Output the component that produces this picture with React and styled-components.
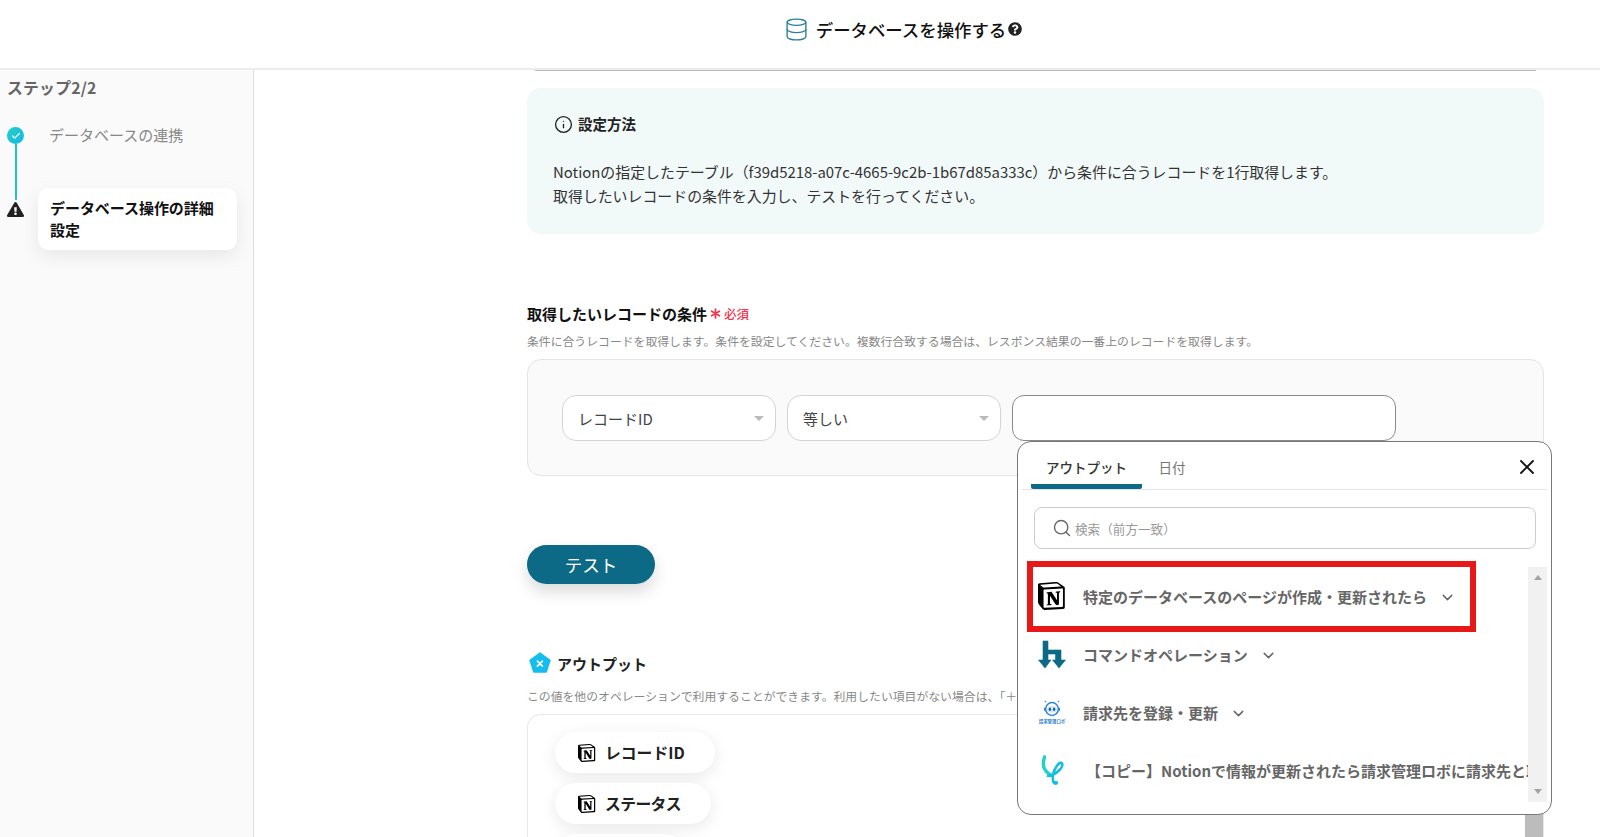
import React from 'react';
import styled, { createGlobalStyle } from 'styled-components';
import { Database, Info, Search, X, ChevronDown, Check } from 'lucide-react';
import { FaQuestionCircle, FaExclamationTriangle } from 'react-icons/fa';

const Global = createGlobalStyle`
  html, body { margin: 0; padding: 0; background: #fff; }
  * { box-sizing: border-box; }
  body { font-family: "Noto Sans CJK JP", "Noto Sans", sans-serif; color: #222; }
`;

const Page = styled.div`
  width: 1600px; height: 837px; overflow: hidden;
  display: flex; flex-direction: column;
`;
const Header = styled.header`
  height: 70px; flex: none; display: flex; align-items: center; justify-content: center;
  gap: 7px; padding-bottom: 10px; padding-left: 206px;
  border-bottom: 2px solid #ececec;
`;
const HeaderTitle = styled.h1`
  margin: 0; font-size: 17.4px; font-weight: 500; color: #111; display: flex; align-items: center; gap: 2px;
`;
const Body = styled.div`flex: 1; display: flex; min-height: 0;`;
const Sidebar = styled.aside`
  width: 254px; flex: none; background: #fafafa; border-right: 1px solid #dedede;
  padding: 8px 16px 0 7px;
`;
const StepTitle = styled.div`font-size: 15.8px; font-weight: 700; color: #666; line-height: 20px; letter-spacing: .25px;`;
const Steps = styled.div`
  margin-top: 27px; display: flex; flex-direction: column;
`;
const StepRow = styled.div`
  display: grid; grid-template-columns: 31px 1fr; align-items: flex-start; height: ${p => p.$h}px;
`;
const Rail = styled.div`
  display: flex; flex-direction: column; align-items: center; width: 17px; padding-top: ${p => p.$top}px;
`;
const CheckDot = styled.span`
  width: 17px; height: 17px; flex: none; border-radius: 50%; display: flex; align-items: center; justify-content: center;
  background: linear-gradient(135deg, #1fd0c0, #16b8ea); color: #fff;
`;
const RailLine = styled.span`width: 2px; height: 56px; flex: none; background: #1fc4cc;`;
const StepLabel = styled.div`
  font-size: 15px; color: #888; line-height: 22px; padding-left: 11px; margin-top: -1px;
`;
const ActiveStep = styled.div`
  background: #fff; border-radius: 10px; box-shadow: 0 6px 18px rgba(0,0,0,.08);
  width: 199px; height: 62px; padding: 9px 12px;
  font-size: 15px; font-weight: 700; line-height: 22px; color: #111; letter-spacing: -.05px;
`;
const Main = styled.main`
  flex: 1; padding: 0 56px 0 273px; display: flex; flex-direction: column; min-width: 0;
`;
const TopEdge = styled.div`height: 1px; flex: none; margin: 0 8px; background: #bdbdbd;`;
const InfoBox = styled.section`
  margin-top: 17px; height: 146px; flex: none; background: #f1f9f9; border-radius: 14px; padding: 26px 26px;
`;
const InfoHead = styled.div`
  display: flex; align-items: center; gap: 5px; font-size: 14.5px; font-weight: 700; color: #222; line-height: 20px;
  & > svg { margin-left: 1px; }
`;
const InfoText = styled.p`
  margin: 26px 0 0; font-size: 14.92px; line-height: 24px; color: #333;
`;
const FieldLabel = styled.div`
  margin-top: 69px; display: flex; align-items: center; gap: 3px; height: 22px;
  font-size: 15px; font-weight: 700; color: #111;
`;
const Required = styled.span`color: #f5334f; font-size: 12.5px; font-weight: 500; display: flex; align-items: center; gap: 3px;`;
const Hint = styled.div`
  margin-top: 8px; font-size: 11.85px; line-height: 18px; color: #888; white-space: nowrap;
`;
const ConditionBox = styled.div`
  margin-top: 9px; height: 117px; flex: none; background: #fafafa; border: 1px solid #e4e4e4; border-radius: 14px;
  padding: 35px 34px; display: flex; gap: 11px; align-items: flex-start;
`;
const Select = styled.div`
  width: 214px; height: 46px; background: #fff; border: 1px solid #d4d4d4; border-radius: 14px;
  display: flex; align-items: center; justify-content: space-between; padding: 0 11px 0 15px;
  font-size: 15px; color: #444;
`;
const Caret = styled.span`
  width: 0; height: 0; border-left: 5px solid transparent; border-right: 5px solid transparent; border-top: 5px solid #bbb;
`;
const InputWrap = styled.div`position: relative;`;
const TextInput = styled.div`
  width: 384px; height: 46px; background: #fff; border: 1px solid #8a8a8a; border-radius: 12px;
`;
const Popup = styled.div`
  position: absolute; z-index: 5; top: 46px; left: 5px; width: 535px; height: 374px;
  background: #fff; border: 1px solid #777; border-radius: 14px; padding: 0 4px;
`;
const TabBar = styled.div`
  height: 48px; display: flex; align-items: flex-end; border-bottom: 1px solid #e4e4e4; padding-left: 9px; position: relative;
`;
const Tab = styled.div`
  width: ${p => p.$w}px; height: 48px; display: flex; align-items: center; justify-content: center;
  font-size: 13.5px; padding-top: 8px; font-weight: ${p => p.$active ? 500 : 400}; color: ${p => p.$active ? '#333' : '#777'};
  border-bottom: 5px solid ${p => p.$active ? '#0d6a87' : 'transparent'};
  border-radius: 0 0 2px 2px;
`;
const Close = styled.span`position: absolute; right: 8px; top: 13px; color: #111; display: flex;`;
const SearchBox = styled.div`
  margin: 17px 11px 0 12px; height: 42px; border: 1px solid #ccc; border-radius: 8px;
  display: flex; align-items: center; gap: 3px; padding-left: 17px; font-size: 12.6px; color: #999;
`;
const ListArea = styled.div`
  margin-top: 18px; display: flex; height: 235px; position: relative;
`;
const Rows = styled.div`flex: 1; min-width: 0; overflow: hidden;`;
const Row = styled.div`
  height: 58px; display: flex; align-items: center; padding-left: 15px; white-space: nowrap;
  font-size: 15px; font-weight: 700; color: #666;
`;
const RowIcon = styled.span`width: 30px; height: 30px; flex: none; display: flex; align-items: center; justify-content: center; margin-right: 16px;`;
const RowChevron = styled.span`display: flex; margin-left: 12px; margin-top: 3px; color: #666;`;
const CopyText = styled.span`padding-left: 3px; overflow: hidden;`;
const ScrollTrack = styled.div`
  width: 19px; flex: none; background: #f1f1f1;
  display: flex; flex-direction: column; justify-content: space-between; align-items: center; padding: 8px 0;
`;
const ArrowUp = styled.span`width: 0; height: 0; border-left: 4px solid transparent; border-right: 4px solid transparent; border-bottom: 5px solid #a3a3a3;`;
const ArrowDown = styled.span`width: 0; height: 0; border-left: 4px solid transparent; border-right: 4px solid transparent; border-top: 5px solid #a3a3a3;`;
const Annotation = styled.div`
  position: absolute; left: 5px; top: -6px; width: 449px; height: 71px; border: 6px solid #e81818; pointer-events: none;
`;
const TestButton = styled.button`
  margin-top: 69px; width: 128px; height: 39px; flex: none; border: 0; border-radius: 20px; background: #0d6a87; color: #fff;
  font: 400 17.5px "Noto Sans CJK JP", sans-serif; box-shadow: 0 8px 16px rgba(0,0,0,.14);
`;
const OutputHead = styled.div`
  margin-top: 68px; display: flex; align-items: center; gap: 6px; height: 24px; padding-left: 2px;
  font-size: 15px; font-weight: 700; color: #222;
`;
const OutputHint = styled(Hint)`margin-top: 13px;`;
const OutputBox = styled.div`
  margin-top: 9px; flex: 1; border: 1px solid #e8e8e8; border-radius: 14px 14px 0 0; border-bottom: 0;
  padding: 17px 27px; display: flex; flex-direction: column; align-items: flex-start; gap: 10px; position: relative; min-height: 200px;
`;
const Pill = styled.div`
  height: 41px; flex: none; width: ${p => p.$w ? `${p.$w}px` : 'auto'}; padding: 0 30px 0 23px; display: flex; align-items: center; gap: 9px; border-radius: 21px; background: #fff;
  box-shadow: 0 4px 16px rgba(0,0,0,.09); font-size: 15.8px; font-weight: 700; color: #222;
  letter-spacing: ${p => p.$tight ? '-.6px' : '0'};
`;
const Thumb = styled.div`position: absolute; right: 0; top: 90px; width: 18px; height: 60px; background: #bcbcbc;`;

const NotionLogo = ({ size = 28 }) => (
  <svg width={size} height={size} viewBox="0 0 100 100">
    <path fill="#fff" d="M6.017 4.313l55.333-4.087c6.797-.583 8.543-.19 12.817 2.917l17.663 12.443c2.913 2.14 3.883 2.723 3.883 5.053v68.243c0 4.277-1.553 6.807-6.99 7.193L24.467 99.967c-4.08.193-6.023-.39-8.16-3.113L3.3 79.94C.967 76.827 0 74.497 0 71.773V11.113c0-3.497 1.553-6.413 6.017-6.8z" />
    <path fill="#000" fillRule="evenodd" d="M61.35.227 6.017 4.314C1.553 4.7 0 7.617 0 11.113v60.66c0 2.723.967 5.053 3.3 8.167l13.007 16.913c2.137 2.723 4.08 3.307 8.16 3.113l64.257-3.89c5.433-.387 6.99-2.917 6.99-7.193V20.64c0-2.21-.873-2.847-3.443-4.733L74.167 3.143C69.894.036 68.147-.357 61.35.227zM25.92 19.523c-5.247.353-6.437.433-9.417-1.99L8.927 11.507c-.77-.78-.383-1.753 1.557-1.947l53.193-3.887c4.467-.39 6.793 1.167 8.54 2.527l9.123 6.61c.39.197 1.36 1.36.193 1.36l-54.933 3.307-.68.047zM19.803 88.3V30.367c0-2.53.777-3.697 3.103-3.893L86 22.78c2.14-.193 3.107 1.167 3.107 3.693v57.547c0 2.53-.39 4.67-3.883 4.863l-60.377 3.5c-3.493.193-5.043-.97-5.043-3.983zm59.6-54.827c.387 1.75 0 3.5-1.75 3.7l-2.91.577v42.773c-2.527 1.36-4.853 2.137-6.797 2.137-3.107 0-3.883-.973-6.21-3.887l-19.03-29.94v28.967l6.02 1.363s0 3.5-4.857 3.5l-13.39.777c-.39-.78 0-2.723 1.357-3.11l3.497-.97v-38.3L30.48 40.667c-.39-1.75.58-4.277 3.3-4.473l14.367-.967 19.8 30.327v-26.83l-5.047-.58c-.39-2.143 1.163-3.7 3.103-3.89l13.4-.78z" />
  </svg>
);

const CommandLogo = () => (
  <svg width="30" height="30" viewBox="0 0 30 30" fill="#0d6a87" stroke="#0d6a87" strokeWidth=".6" strokeLinejoin="round">
    <path d="M6 2H11V11H24V21H28.5L22 29 15.5 21H18.5V15H11V21H14L8 29 1.5 21H6Z" />
  </svg>
);

const RobotLogo = () => (
  <svg width="30" height="30" viewBox="0 0 30 30">
    <circle cx="15" cy="12" r="6.4" fill="#fff" stroke="#2f86d6" strokeWidth="1.5" />
    <rect x="10" y="9" width="10" height="6.4" rx="3.2" fill="#d5e8f9" />
    <ellipse cx="12.9" cy="12.2" rx="1.2" ry="1.7" fill="#1f5f9e" />
    <ellipse cx="17.1" cy="12.2" rx="1.2" ry="1.7" fill="#1f5f9e" />
    <circle cx="8.5" cy="4.5" r=".8" fill="#2f86d6" />
    <circle cx="21.5" cy="4.5" r=".8" fill="#2f86d6" />
    <rect x="7" y="10.5" width="1.4" height="3.5" rx=".7" fill="#2f86d6" />
    <rect x="21.6" y="10.5" width="1.4" height="3.5" rx=".7" fill="#2f86d6" />
    <text x="15" y="26" textAnchor="middle" fontSize="4.4" fill="#2f7fc8" fontFamily="Noto Sans CJK JP">請求管理ロボ</text>
  </svg>
);

const YoomLogo = () => (
  <svg width="30" height="30" viewBox="0 0 30 30" fill="none" strokeLinecap="round" strokeLinejoin="round">
    <path d="M7.5 2C6 7 5.5 12 8.5 15.5 10.5 18 12 19.5 14 20" stroke="#1fd3c4" strokeWidth="3.4" />
    <path d="M11 21C18 21 27 12 25 8.5 23 5.5 17 13 16 20 15.5 25 16 28 18 28.5 20 29 20.5 27 18.5 27" stroke="#16bce6" strokeWidth="2.6" />
  </svg>
);

const OutputMark = () => (
  <svg width="22" height="22" viewBox="0 0 22 22">
    <path d="M11 1 21 8.2 17.2 20H4.8L1 8.2z" fill="#14bdee" stroke="#14bdee" strokeWidth="1.4" strokeLinejoin="round" />
    <path d="M8.4 9.2l5 5M13.4 9.2l-5 5" stroke="#fff" strokeWidth="1.7" strokeLinecap="round" />
  </svg>
);

const RequiredStar = () => (
  <svg width="11" height="11" viewBox="0 0 11 11" stroke="#f5334f" strokeWidth="1.7" strokeLinecap="round">
    <path d="M5.5 1v9M1.6 3.2l7.8 4.6M9.4 3.2L1.6 7.8" />
  </svg>
);

const rows = [
  { icon: <NotionLogo />, text: '特定のデータベースのページが作成・更新されたら' },
  { icon: <CommandLogo />, text: 'コマンドオペレーション' },
  { icon: <RobotLogo />, text: '請求先を登録・更新' },
];

export default function App() {
  return (
    <Page>
      <Global />
      <Header>
        <Database size={25} color="#2a7f99" strokeWidth={1.3} />
        <HeaderTitle>データベースを操作する<FaQuestionCircle size={14} color="#222" /></HeaderTitle>
      </Header>
      <Body>
        <Sidebar>
          <StepTitle>ステップ2/2</StepTitle>
          <Steps>
            <StepRow $h={63}>
              <Rail $top={2}>
                <CheckDot><Check size={10} strokeWidth={3} /></CheckDot>
                <RailLine />
              </Rail>
              <StepLabel>データベースの連携</StepLabel>
            </StepRow>
            <StepRow $h={70}>
              <Rail $top={13}>
                <FaExclamationTriangle size={17} color="#222" />
              </Rail>
              <ActiveStep>データベース操作の詳細<br />設定</ActiveStep>
            </StepRow>
          </Steps>
        </Sidebar>
        <Main>
          <TopEdge />
          <InfoBox>
            <InfoHead><Info size={19} color="#222" strokeWidth={1.7} />設定方法</InfoHead>
            <InfoText>
              Notionの指定したテーブル（f39d5218-a07c-4665-9c2b-1b67d85a333c）から条件に合うレコードを1行取得します。<br />
              取得したいレコードの条件を入力し、テストを行ってください。
            </InfoText>
          </InfoBox>
          <FieldLabel>取得したいレコードの条件<Required><RequiredStar />必須</Required></FieldLabel>
          <Hint>条件に合うレコードを取得します。条件を設定してください。複数行合致する場合は、レスポンス結果の一番上のレコードを取得します。</Hint>
          <ConditionBox>
            <Select>レコードID<Caret /></Select>
            <Select>等しい<Caret /></Select>
            <InputWrap>
              <TextInput />
              <Popup>
                <TabBar>
                  <Tab $w={111} $active>アウトプット</Tab>
                  <Tab $w={60}>日付</Tab>
                  <Close><X size={24} strokeWidth={1.8} /></Close>
                </TabBar>
                <SearchBox><Search size={20} color="#666" strokeWidth={1.7} />検索（前方一致）</SearchBox>
                <ListArea>
                  <Rows>
                    {rows.map(r => (
                      <Row key={r.text}>
                        <RowIcon>{r.icon}</RowIcon>
                        {r.text}
                        <RowChevron><ChevronDown size={17} strokeWidth={2} /></RowChevron>
                      </Row>
                    ))}
                    <Row>
                      <RowIcon><YoomLogo /></RowIcon>
                      <CopyText>【コピー】Notionで情報が更新されたら請求管理ロボに請求先と取引を登録する</CopyText>
                    </Row>
                  </Rows>
                  <ScrollTrack><ArrowUp /><ArrowDown /></ScrollTrack>
                  <Annotation />
                </ListArea>
              </Popup>
            </InputWrap>
          </ConditionBox>
          <TestButton>テスト</TestButton>
          <OutputHead><OutputMark />アウトプット</OutputHead>
          <OutputHint>この値を他のオペレーションで利用することができます。利用したい項目がない場合は、「＋</OutputHint>
          <OutputBox>
            <Pill><NotionLogo size={18} />レコードID</Pill>
            <Pill $tight><NotionLogo size={18} />ステータス</Pill>
            <Pill $w={130} />
            <Thumb />
          </OutputBox>
        </Main>
      </Body>
    </Page>
  );
}
